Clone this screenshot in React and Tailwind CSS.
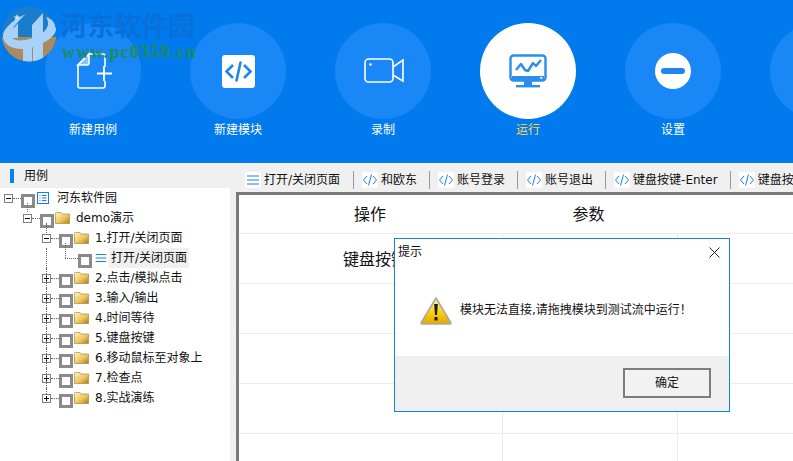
import React from "react";

const FONT = "font-['DejaVu_Sans','Noto_Sans_CJK_SC',sans-serif]";

function NewCaseIcon() {
  return (
    <svg width="40" height="38" viewBox="0 0 40 38" fill="none">
      <path d="M13 2 L2 13 L2 34 Q2 36 4 36 L27 36 Q29 36 29 34 L29 29" stroke="#fff" strokeWidth="1.6" />
      <path d="M13 2 L27 2 Q29 2 29 4 L29 15" stroke="#fff" strokeWidth="1.6" />
      <path d="M13 2 L13 11 Q13 13 11 13 L2 13 Z" fill="#8fc3fa" stroke="#fff" strokeWidth="1.6" />
      <path d="M28 14 L28 29 M21 21.5 L36 21.5" stroke="#fff" strokeWidth="1.8" />
    </svg>
  );
}

function ModuleIcon() {
  return (
    <svg width="33" height="33" viewBox="0 0 33 33">
      <rect width="33" height="33" rx="3" fill="#fff" />
      <path d="M11 10 L4.5 16.5 L11 23 M22 10 L28.5 16.5 L22 23" fill="none" stroke="#1f86ee" strokeWidth="2.6" />
      <path d="M18.5 7.5 L14.5 25.5" fill="none" stroke="#1f86ee" strokeWidth="2.6" strokeLinecap="round" />
    </svg>
  );
}

function RecordIcon() {
  return (
    <svg width="40" height="26" viewBox="0 0 40 26" fill="none">
      <rect x="1" y="1" width="28" height="23" rx="3.5" stroke="#fff" strokeWidth="1.6" />
      <path d="M29 9 L39 2 L39 23 L29 17" stroke="#fff" strokeWidth="1.6" />
      <circle cx="6.5" cy="6.5" r="1.3" fill="#fff" />
    </svg>
  );
}

function RunIcon() {
  return (
    <svg width="38" height="34" viewBox="0 0 38 34" fill="none">
      <rect x="1.5" y="1.5" width="35" height="25" rx="3" stroke="#2b8df0" strokeWidth="2.4" />
      <rect x="3" y="22" width="32" height="4" fill="#2b8df0" />
      <rect x="31" y="23" width="2.5" height="1.6" fill="#fff" />
      <path d="M7 16 L12 10 L16 16 L19 17 L24 9 L27 12 L32 6" stroke="#2b8df0" strokeWidth="2.4" strokeLinejoin="round" />
      <rect x="15" y="27" width="8" height="4" fill="#2b8df0" />
      <rect x="7" y="31" width="24" height="2.4" fill="#2b8df0" />
    </svg>
  );
}

function SettingsIcon() {
  return (
    <svg width="36" height="36" viewBox="0 0 36 36">
      <circle cx="18" cy="18" r="18" fill="#fff" />
      <rect x="6" y="15" width="24" height="6" rx="3" fill="#1f86ee" />
    </svg>
  );
}

function HeaderAction({ label, active, children }) {
  return (
    <div className="flex w-24 shrink-0 flex-col items-center">
      <div
        className={
          active
            ? "flex h-24 w-24 items-center justify-center rounded-full bg-white"
            : "flex h-24 w-24 items-center justify-center rounded-full bg-[#1a87f6]"
        }
      >
        {children}
      </div>
      <span className={active ? "mt-[2px] text-xs leading-[18px] text-[#ffd84d]" : "mt-[2px] text-xs leading-[18px] text-white"}>
        {label}
      </span>
    </div>
  );
}

function SiteMark() {
  return (
    <svg className="absolute left-0 top-[5px]" width="58" height="58" viewBox="0 0 58 58">
      <defs>
        <clipPath id="mark-disc">
          <circle cx="29" cy="29" r="27.5" />
        </clipPath>
      </defs>
      <g clipPath="url(#mark-disc)">
        <rect width="58" height="58" fill="#1a7ccc" />
        <rect y="32" width="58" height="26" fill="#aa8b5c" />
        <rect x="23" y="38" width="9" height="20" fill="#a8d2fa" />
        <rect x="33" y="38" width="10" height="20" fill="#a8d2fa" />
        <path d="M10 23 L14 23 L18 18 L18 33 L10 33 Z" fill="#a8d2fa" />
        <path d="M32 20 L43 8 L43 31 L32 36 Z" fill="#a8d2fa" />
        <path d="M26 9 C10 16 2 26 3 32 C4 42 18 46 30 43 C42 40 56 32 56 24 C56 18 52 14 46 12 C50 18 48 24 42 28 C32 35 18 38 12 33 C7 28 18 16 26 9 Z" fill="#a8d2fa" />
        <path d="M17 9 L18 11.4 L20.6 11.4 L18.6 13 L19.3 15.5 L17 14 L14.7 15.5 L15.4 13 L13.4 11.4 L16 11.4 Z" fill="#c9e2fb" />
      </g>
    </svg>
  );
}

function Folder() {
  return (
    <svg width="15" height="12" viewBox="0 0 15 12" className="shrink-0">
      <defs>
        <linearGradient id="folder-fill" x1="0" y1="0" x2="1" y2="1">
          <stop offset="0" stopColor="#fff2bd" />
          <stop offset="0.55" stopColor="#efc860" />
          <stop offset="1" stopColor="#a87a20" />
        </linearGradient>
      </defs>
      <path d="M0.5 1.5 Q0.5 0.5 1.5 0.5 L6 0.5 L7 2 L14.5 2 L14.5 11.5 L0.5 11.5 Z" fill="url(#folder-fill)" stroke="#a98b4a" strokeWidth="0.7" />
    </svg>
  );
}

function ListLines({ size = 16 }) {
  return (
    <svg width={size} height={size} viewBox="0 0 16 16" className="shrink-0">
      <path d="M2 4 H14 M2 8 H14 M2 12 H14" stroke="#1580ea" strokeWidth="1.2" />
    </svg>
  );
}

function RootIcon() {
  return (
    <svg width="12" height="12" viewBox="0 0 12 12" className="shrink-0">
      <rect x="0.5" y="0.5" width="11" height="11" fill="#fff" stroke="#1580ea" />
      <path d="M2.5 3.5 H3.5 M5 3.5 H9.5 M2.5 6 H3.5 M5 6 H9.5 M2.5 8.5 H3.5 M5 8.5 H9.5" stroke="#1580ea" />
    </svg>
  );
}

function Expander({ open }) {
  return (
    <svg width="9" height="9" viewBox="0 0 9 9" className="shrink-0">
      <rect x="0.5" y="0.5" width="8" height="8" fill="#fff" stroke="#7f7f7f" />
      <path d={open ? "M2 4.5 H7" : "M2 4.5 H7 M4.5 2 V7"} stroke="#000" />
    </svg>
  );
}

function Check() {
  return <span className="mt-[5px] h-[14px] w-[14px] shrink-0 border-[3px] border-[#8a8a8a] bg-white" />;
}

const Dots = () => <span className="w-2 shrink-0 border-t border-dotted border-[#666]" />;

function FolderRow({ label, open, pad, rail }) {
  return (
    <div className={`relative flex h-5 items-center ${pad}`}>
      {rail}
      <Expander open={open} />
      <Dots />
      <Check />
      <span className="ml-[1px]"><Folder /></span>
      <span className="ml-[6px] whitespace-nowrap text-xs text-[#111]">{label}</span>
    </div>
  );
}

const Rail = ({ className }) => <span className={`absolute border-l border-dotted border-[#666] ${className}`} />;

function TreePanel() {
  const closed = ["2.点击/模拟点击", "3.输入/输出", "4.时间等待", "5.键盘按键", "6.移动鼠标至对象上", "7.检查点", "8.实战演练"];
  return (
    <aside className="flex w-[230px] shrink-0 flex-col">
      <div className="flex h-[25px] items-center pl-[10px]">
        <span className="h-[14px] w-1 bg-[#0a7fef]" />
        <span className="ml-[10px] text-xs text-[#111]">用例</span>
      </div>
      <div className="flex-1 bg-white">
        <div className="relative flex h-5 items-center pl-1">
          <Expander open />
          <Dots />
          <Check />
          <span className="ml-[2px]"><RootIcon /></span>
          <span className="ml-2 whitespace-nowrap text-xs text-[#111]">河东软件园</span>
        </div>
        <div className="relative flex h-5 items-center pl-[23px]">
          <Rail className="left-[27px] -top-[5px] h-[9px]" />
          <Expander open />
          <Dots />
          <Check />
          <span className="ml-[1px]"><Folder /></span>
          <span className="ml-[6px] whitespace-nowrap text-xs text-[#111]">demo演示</span>
        </div>
        <FolderRow label="1.打开/关闭页面" open pad="pl-[42px]" rail={<Rail className="left-[46px] -top-[5px] h-[10px]" />} />
        <div className="relative flex h-5 items-center pl-[65px]">
          <Rail className="left-[46px] top-0 h-5" />
          <Rail className="left-[65px] -top-[5px] h-[15px]" />
          <span className="w-[13px] shrink-0 border-t border-dotted border-[#666]" />
          <Check />
          <span className="ml-[2px]"><ListLines size={14} /></span>
          <span className="ml-[1px] whitespace-nowrap bg-[#f0f0f0] px-[2px] py-[2px] text-xs text-[#111]">打开/关闭页面</span>
        </div>
        {closed.map((label, i) => (
          <FolderRow
            key={label}
            label={label}
            pad="pl-[42px]"
            rail={<Rail className={i === closed.length - 1 ? "left-[46px] top-0 h-[6px]" : "left-[46px] top-0 h-5"} />}
          />
        ))}
      </div>
    </aside>
  );
}

function CodeGlyph() {
  return (
    <svg width="16" height="16" viewBox="0 0 16 16" className="shrink-0 bg-white">
      <path d="M5 4 L1.5 8 L5 12 M11 4 L14.5 8 L11 12 M9.5 2.5 L6.5 13.5" fill="none" stroke="#1580ea" strokeWidth="1" />
    </svg>
  );
}

function ToolItem({ label, icon, wide, last }) {
  return (
    <>
      <div className="flex shrink-0 items-center gap-[3px]">
        {icon}
        <span className="whitespace-nowrap text-xs text-[#111]">{label}</span>
      </div>
      {!last && <span className={wide ? "ml-[13px] mr-2 h-[18px] w-[1px] shrink-0 bg-[#999]" : "ml-[12px] mr-2 h-[18px] w-[1px] shrink-0 bg-[#999]"} />}
    </>
  );
}

function Toolbar() {
  return (
    <div className="flex h-[29px] items-center overflow-hidden pl-[9px] pt-[4px]">
      <ToolItem label="打开/关闭页面" wide icon={<span className="bg-white"><ListLines /></span>} />
      <ToolItem label="和欧东" icon={<CodeGlyph />} />
      <ToolItem label="账号登录" icon={<CodeGlyph />} />
      <ToolItem label="账号退出" icon={<CodeGlyph />} />
      <ToolItem label="键盘按键-Enter" icon={<CodeGlyph />} />
      <ToolItem label="键盘按键-Tab" icon={<CodeGlyph />} last />
    </div>
  );
}

function StepTable() {
  const rows = ["键盘按键", "", "", "", ""];
  return (
    <div className="min-h-0 flex-1 border-l-[3px] border-t-[3px] border-[#7a7a7a] bg-white">
      <div className="grid h-[39px] grid-cols-[264px_175px_1fr] border-b border-[#ececec] text-base leading-[40px] text-[#111]">
        <div className="pr-[2px] text-center">操作</div>
        <div className="pr-[4px] text-center">参数</div>
        <div />
      </div>
      {rows.map((text, i) => (
        <div key={i} className="grid h-[50px] grid-cols-[264px_175px_1fr] border-b border-[#ececec]">
          <div className="border-r border-[#ececec] pl-[104px] pt-[14px] text-base leading-6 text-[#111]">{text}</div>
          <div className="border-r border-[#ececec]" />
          <div />
        </div>
      ))}
    </div>
  );
}

function WarningIcon() {
  return (
    <svg width="32" height="28" viewBox="0 0 32 28">
      <defs>
        <linearGradient id="warn-fill" x1="0" y1="0" x2="0" y2="1">
          <stop offset="0" stopColor="#fff6b0" />
          <stop offset="0.55" stopColor="#fbd10a" />
          <stop offset="1" stopColor="#e0a800" />
        </linearGradient>
      </defs>
      <path d="M16 1 L31 26 Q31 27 30 27 L2 27 Q1 27 1 26 Z" fill="url(#warn-fill)" stroke="#a9a9a9" strokeWidth="1.6" strokeLinejoin="round" />
      <path d="M14.2 7 H17.8 L17 18 H15 Z" fill="#1a1a1a" />
      <rect x="14.5" y="20" width="3" height="3.4" fill="#1a1a1a" />
    </svg>
  );
}

function AlertDialog() {
  return (
    <div className="absolute left-[394px] top-[238px] flex h-[174px] w-[336px] flex-col border border-[#1a7fd6] bg-white">
      <div className="flex h-6 items-center justify-between pl-[3px] pr-[9px] pt-[2px]">
        <span className="text-xs text-[#111]">提示</span>
        <svg width="11" height="11" viewBox="0 0 11 11">
          <path d="M0.5 0.5 L10.5 10.5 M10.5 0.5 L0.5 10.5" stroke="#222" strokeWidth="1" />
        </svg>
      </div>
      <div className="flex h-[93px] items-start pl-[25px] pt-[34px]">
        <WarningIcon />
        <span className="ml-[8px] mt-[5px] whitespace-nowrap text-xs text-[#111]">模块无法直接,请拖拽模块到测试流中运行！</span>
      </div>
      <div className="flex flex-1 items-start justify-end bg-[#f0f0f0] pr-[18px] pt-[12px]">
        <button className="h-[30px] w-[88px] border-2 border-[#7d7d7d] bg-[#f2f2f2] text-xs text-[#111] outline-none">确定</button>
      </div>
    </div>
  );
}

export default function App() {
  return (
    <div className={`relative flex h-[461px] w-[793px] flex-col overflow-hidden bg-[#f0f0f0] ${FONT}`}>
      <header className="flex h-[163px] shrink-0 gap-[49px] overflow-hidden bg-[#007aed] pl-[45px] pt-[23px]">
        <HeaderAction label="新建用例"><span className="ml-[6px]"><NewCaseIcon /></span></HeaderAction>
        <HeaderAction label="新建模块"><ModuleIcon /></HeaderAction>
        <HeaderAction label="录制"><span className="ml-[2px]"><RecordIcon /></span></HeaderAction>
        <HeaderAction label="运行" active><RunIcon /></HeaderAction>
        <HeaderAction label="设置"><SettingsIcon /></HeaderAction>
        <HeaderAction label="" />
      </header>

      <div className="flex min-h-0 flex-1">
        <TreePanel />
        <main className="ml-[6px] flex min-w-0 flex-1 flex-col">
          <Toolbar />
          <StepTable />
        </main>
      </div>

      {/* Site watermark stamped over the top-left corner */}
      <SiteMark />
      <span className="absolute left-[60px] top-[9px] whitespace-nowrap text-[27px] font-bold leading-[36px] text-[#0870d8]">河东软件园</span>
      <span className="absolute left-[62px] top-[42px] whitespace-nowrap font-['Liberation_Serif',serif] text-[18px] font-bold leading-5 tracking-[1.2px] text-[#1c8c58]">www.pc0359.cn</span>

      <AlertDialog />
    </div>
  );
}
